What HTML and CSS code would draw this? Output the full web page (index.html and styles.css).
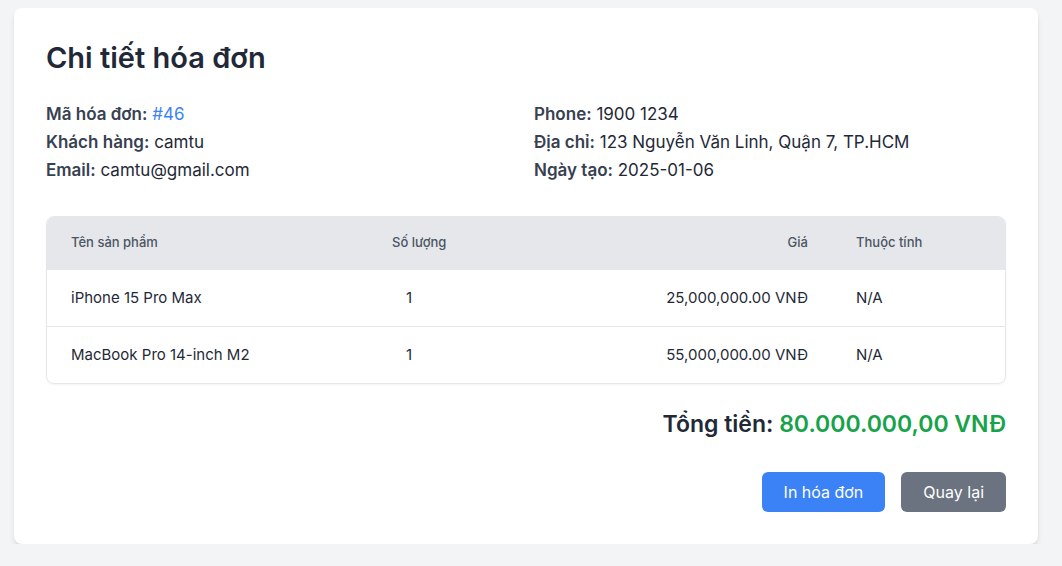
FILE: index.html
```html
<!DOCTYPE html>
<html lang="vi">
<head>
<meta charset="utf-8">
<title>Chi tiết hóa đơn</title>
<link rel="stylesheet" href="styles.css">
</head>
<body>
<div class="page">
  <div class="card">
    <h1 class="title">Chi tiết hóa đơn</h1>
    <div class="info">
      <div class="info-col">
        <p><span class="label">Mã hóa đơn:</span> <span class="link">#46</span></p>
        <p><span class="label">Khách hàng:</span> camtu</p>
        <p><span class="label">Email:</span> camtu@gmail.com</p>
      </div>
      <div class="info-col">
        <p><span class="label">Phone:</span> 1900 1234</p>
        <p><span class="label">Địa chỉ:</span> 123 Nguyễn Văn Linh, Quận 7, TP.HCM</p>
        <p><span class="label">Ngày tạo:</span> 2025-01-06</p>
      </div>
    </div>
    <div class="table-wrap">
      <table class="items">
        <thead>
          <tr>
            <th class="c-name">Tên sản phẩm</th>
            <th class="c-qty">Số lượng</th>
            <th class="c-price">Giá</th>
            <th class="c-attr">Thuộc tính</th>
          </tr>
        </thead>
        <tbody>
          <tr>
            <td class="c-name">iPhone 15 Pro Max</td>
            <td class="c-qty q">1</td>
            <td class="c-price">25,000,000.00 VNĐ</td>
            <td class="c-attr">N/A</td>
          </tr>
          <tr class="last">
            <td class="c-name">MacBook Pro 14-inch M2</td>
            <td class="c-qty q">1</td>
            <td class="c-price">55,000,000.00 VNĐ</td>
            <td class="c-attr">N/A</td>
          </tr>
        </tbody>
      </table>
    </div>
    <div class="total">Tổng tiền: <span class="amount">80.000.000,00 VNĐ</span></div>
    <div class="actions">
      <button class="btn btn-blue">In hóa đơn</button>
      <button class="btn btn-gray">Quay lại</button>
    </div>
  </div>
</div>
</body>
</html>
```

FILE: styles.css
```css
* { box-sizing: border-box; }
html, body { margin: 0; padding: 0; }
body {
  background: #f3f4f6;
  font-family: "Inter", "Noto Sans", sans-serif;
  color: #1f2937;
}
.page { padding: 8px 0 0 14px; }
.card {
  width: 1024px;
  background: #fff;
  border-radius: 8px;
  box-shadow: 0 4px 6px -1px rgba(0,0,0,0.1), 0 2px 4px -2px rgba(0,0,0,0.1);
  padding: 32px;
}
.title {
  margin: 0 0 24px;
  font-size: 29px;
  line-height: 36px;
  font-weight: 600;
  color: #1f2937;
}
.info {
  display: grid;
  grid-template-columns: 1fr 1fr;
  column-gap: 16px;
  margin-bottom: 32px;
}
.info p {
  margin: 0;
  font-size: 17px;
  line-height: 28px;
  color: #1f2937;
}
.label { font-weight: 600; color: #374151; }
.link { color: #3b82f6; }
.table-wrap {
  border: 1px solid #e5e7eb;
  border-radius: 8px;
  overflow: hidden;
  box-shadow: 0 1px 2px rgba(0,0,0,0.05);
}
.items {
  width: 100%;
  border-collapse: collapse;
  table-layout: fixed;
}
.items th {
  background: #e5e7eb;
  color: #4b5563;
  font-size: 13px;
  font-weight: 500;
  text-align: left;
  height: 53px;
  padding: 0 24px 3px;
}
.items td {
  font-size: 15px;
  height: 56px;
  padding: 0 24px;
  color: #1f2937;
  border-top: 1px solid #e5e7eb;
}
.items tbody tr:first-child td { border-top: none; }
.items tr.last td { height: 57px; }
.c-name { width: 321px; }
.c-qty { width: 160px; }
.c-price { width: 304px; text-align: right !important; }
.items td.q { padding-left: 38px; }
.total {
  margin-top: 24px;
  text-align: right;
  font-size: 23px;
  line-height: 32px;
  font-weight: 600;
  color: #1f2937;
}
.amount { color: #16a34a; }
.actions {
  margin-top: 32px;
  display: flex;
  justify-content: flex-end;
  gap: 16px;
}
.btn {
  border: none;
  border-radius: 6px;
  height: 40px;
  padding: 0 22px;
  font-family: inherit;
  font-size: 16px;
  color: #fff;
  cursor: pointer;
}
.btn-blue { background: #3b82f6; }
.btn-gray { background: #6b7280; }
```
